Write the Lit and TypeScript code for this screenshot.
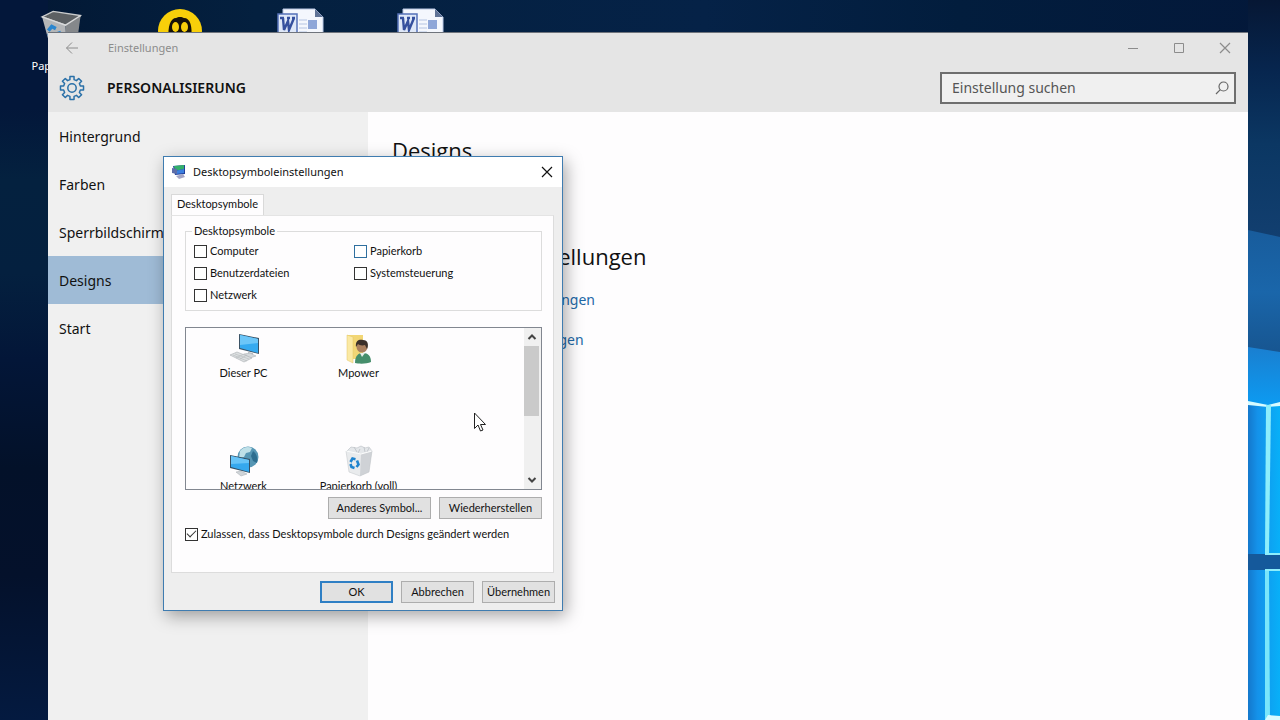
import { LitElement, html, css, svg, nothing } from "lit";
import { customElement, state } from "lit/decorators.js";

const binIcon = (full: boolean) => html`<svg viewBox="0 0 32 32" aria-hidden="true">
  ${full
    ? svg`<path d="M4 6l4-4 6 1 4-2 4 2 4-1 3 4-2 3H7z" fill="#e4e7ea" stroke="#b9bec3" stroke-width=".6"/>
          <path d="M11 2l3 5M17 4l-2 4M21 2l1 5M26 3l-2 4" stroke="#bfc4c9" stroke-width=".9" fill="none"/>
          <path d="M3 6l15 3 11-3-3 21-9 4-11-4z" fill="#e9ebed"/>
          <path d="M18 9l11-3-3 21-9 4z" fill="#cfd2d6"/>
          <path d="M3 6l15 3 11-3" fill="none" stroke="#fbfcfc" stroke-width="1.2"/>
          <path d="M3 6l3 21 11 4 9-4 3-21" fill="none" stroke="#bfc3c7" stroke-width=".5"/>
          <g fill="none" stroke="#1f84cf" stroke-width="2.6">
            <path d="M7.500 17l2-3.500 3 .7"/><path d="M14 15.500l1.500 4-2 2.500"/><path d="M11.500 23l-3-1-1-3"/>
          </g>`
    : svg`<path d="M3 5l8-4 20 3-5 6-6 1z" fill="#5c6063" stroke="#c9cbcc" stroke-width="1"/>
          <path d="M3 5l17 6 1 20-12-4z" fill="#b4b6b8"/>
          <path d="M20 11L31 4l-3 22-7 5z" fill="#85888b"/>
          <path d="M3 5l17 6 11-7" fill="none" stroke="#d9dadb" stroke-width="1"/>
          <g fill="none" stroke="#2a86cf" stroke-width="2.6">
            <path d="M7.500 15l2.500-3 3 1.500"/><path d="M15 15.500l1.500 4-2 2"/><path d="M12 22l-3-2-1-3"/>
          </g>`}
</svg>`;

const beeIcon = html`<svg viewBox="0 0 48 48" aria-hidden="true">
  <circle cx="24" cy="23" r="22" fill="#f8cf0a"/>
  <path d="M13 32c-2-14 2-22 7-22 2-1.500 6-1.500 8 0 6 0 9 8 7 22z" fill="#15110a"/>
  <ellipse cx="19.500" cy="19" rx="3.500" ry="5" fill="#f8cf0a"/><ellipse cx="28.500" cy="19" rx="3.500" ry="5" fill="#f8cf0a"/>
</svg>`;

const wordIcon = html`<svg viewBox="0 0 48 48" aria-hidden="true">
  <path d="M7 1h32l8 8v38H7z" fill="#f4f7fd" stroke="#b9c7e4" stroke-width="1"/>
  <path d="M39 1v8h8z" fill="#5f7396"/>
  <path d="M23 12h8M23 16h8M23 20h8M23 24h8" stroke="#b5c4e2" stroke-width="1"/>
  <rect x="32" y="12" width="9" height="9" fill="#8ea6d8"/>
  <rect x="2" y="6" width="19" height="20" fill="#dfe8f8" stroke="#5572b8" stroke-width="1.500"/>
  <path d="M4 10h4M7 10l1 12 4-9 1 9 5-12M11 10h3M16 10h3" fill="none" stroke="#35509e" stroke-width="2.400"/>
</svg>`;

const gearPath = (() => {
  const pts: string[] = [];
  for (let i = 0; i < 8; i++) {
    const at = (r: number, d: number) => {
      const a = ((i * 45 + d) * Math.PI) / 180;
      return `${(13 + r * Math.cos(a)).toFixed(2)} ${(13 + r * Math.sin(a)).toFixed(2)}`;
    };
    pts.push(at(8.6, -14), at(11.7, -10), at(11.7, 10), at(8.6, 14));
  }
  return "M" + pts.join("L") + "Z";
})();

const pcIcon = html`<svg viewBox="0 0 32 32" aria-hidden="true">
  <path d="M11 2l20 4v16l-20-5z" fill="#3b5366"/>
  <path d="M12 3l18 4v14l-18-5z" fill="#35aaf0"/>
  <path d="M12 3l18 4v4L12 13z" fill="#6cc6f8"/>
  <path d="M20 20l5 1v3l-5-1z" fill="#b9bfc4"/>
  <path d="M16 22l6-1 6 3-6 2z" fill="#d5d9dc" stroke="#a5abb0" stroke-width=".5"/>
  <path d="M2 23l7-3 15 6-8 4z" fill="#dcdfe1" stroke="#a9aeb2" stroke-width=".6"/>
  <path d="M5 23l14 6M7 22l14 5M8 26l8-4M12 27l7-4" stroke="#b3b8bb" stroke-width=".6"/>
</svg>`;

const userFolderIcon = html`<svg viewBox="0 0 32 32" aria-hidden="true">
  <path d="M4 3h16v24H8l-4 1z" fill="#f2d675"/>
  <path d="M4 3l6 2v26l-6-3z" fill="#fbe9a4" stroke="#e3c765" stroke-width=".5"/>
  <circle cx="19" cy="15" r="5.500" fill="#a97f5f"/>
  <path d="M13 15c-1-7 4-8 7-7 5 0 6 5 4 9l-2-4c-3 1-6 0-7-1z" fill="#3a2f2a"/>
  <path d="M12 31c0-7 3-10 8-10s8 3 8 9c-4 2-12 2-16 1z" fill="#468e6c"/>
  <path d="M17 21l2 4 3-4z" fill="#e9efe9"/>
</svg>`;

const networkIcon = html`<svg viewBox="0 0 32 32" aria-hidden="true">
  <circle cx="20" cy="12" r="10.500" fill="#5696b4"/>
  <path d="M12 6c3-4 8-5 12-3l-2 4-4 1-2 4-5 1z" fill="#bfe0e8"/>
  <path d="M25 6c4 3 5 8 4 12l-4-2-2-5z" fill="#2e6e90"/>
  <path d="M2 10l20 4v14L2 23z" fill="#355064"/>
  <path d="M3 11l18 4v12L3 22z" fill="#35a8ee"/>
  <path d="M3 11l18 4v3L3 19z" fill="#68c4f7"/>
  <path d="M8 27l5-1 6 3-6 2z" fill="#cfd4d8" stroke="#a5abb0" stroke-width=".5"/>
</svg>`;

const monitorIcon = html`<svg viewBox="0 0 16 16" aria-hidden="true">
  <path d="M2 2l12-1v9L4 11z" fill="#23409a"/>
  <path d="M3 2l10-1v4L4 7z" fill="#33b06a"/>
  <path d="M4 7l9-2v4l-8 1z" fill="#3b7fe0"/>
  <path d="M1 4l5 1v5L1 9z" fill="#5d6da8"/>
  <path d="M5 12l7-2 2 3-6 2z" fill="#a4a5c4"/>
</svg>`;

const chevron = (up: boolean) => html`<svg viewBox="0 0 10 10" aria-hidden="true">
  <path d=${up ? "M1.500 7L5 3.500 8.500 7" : "M1.500 3L5 6.500 8.500 3"} fill="none" stroke="#444" stroke-width="2"/>
</svg>`;

const closeIcon = html`<svg viewBox="0 0 12 12" aria-hidden="true">
  <path d="M1 1l10 10M11 1L1 11" fill="none" stroke="currentColor" stroke-width="1.200"/>
</svg>`;

@customElement("desktop-wallpaper")
class DesktopWallpaper extends LitElement {
  static styles = css`
    :host { display: block; background: linear-gradient(90deg, #021733 0, #04203f 20%, #052247 55%, #021d3d 75%, #03183a 100%); }
    .scene { display: flex; justify-content: space-between; height: 100%; }
    .shade { width: 48px; background: linear-gradient(180deg, #03173a 0, #03173a 15%, #04213f 25%, #04203f 38%, #031638 50%, #031129 65%, #04112b 80%, #041a40 100%); }
    .light { width: 32px; height: 100%; }
  `;
  render() {
    return html`<div class="scene">
      <div class="shade"></div>
      <svg class="light" viewBox="0 0 32 720" preserveAspectRatio="xMaxYMin slice" aria-hidden="true">
        <defs>
          <linearGradient id="sky" x1="0" y1="0" x2="0" y2="1">
            <stop offset="0" stop-color="#061734"/><stop offset=".3" stop-color="#07264f"/>
            <stop offset=".6" stop-color="#0b3763"/><stop offset="1" stop-color="#123f70"/>
          </linearGradient>
          <linearGradient id="haze" x1="0" y1="0" x2="0" y2="1">
            <stop offset="0" stop-color="#185c9c"/><stop offset=".5" stop-color="#1a66aa"/><stop offset="1" stop-color="#175590"/>
          </linearGradient>
          <linearGradient id="beam" x1="0" y1="0" x2="0" y2="1">
            <stop offset="0" stop-color="#1a7fd0"/><stop offset="1" stop-color="#0c9bf2"/>
          </linearGradient>
          <linearGradient id="pane" x1="0" y1="0" x2="1" y2="0">
            <stop offset="0" stop-color="#1478cc"/><stop offset=".3" stop-color="#1492ea"/><stop offset="1" stop-color="#08b0f8"/>
          </linearGradient>
        </defs>
        <rect width="32" height="240" fill="url(#sky)"/>
        <path d="M0 230l32 7v117H0z" fill="url(#haze)"/>
        <path d="M0 347l32 5v54H0z" fill="url(#beam)"/>
        <rect y="404" width="32" height="316" fill="url(#pane)"/>
        <path d="M0 401l20 4 12-3v4l-12 1-20-2z" fill="#d8fbff"/>
        <rect y="554" width="32" height="16" fill="#15599b"/>
        <path d="M18 405h5l-2 149h-4z" fill="#8deefc"/><path d="M17 554h15" stroke="#8deefc" stroke-width="2"/>
        <path d="M17 570h4l1 150h-5z" fill="#7ae6fb"/><path d="M17 570h15" stroke="#8deefc" stroke-width="2"/>
        <path d="M17 720l3-5 12 1v4z" fill="#d8fbff"/>
      </svg>
    </div>`;
  }
}

@customElement("settings-window")
class SettingsWindow extends LitElement {
  static styles = css`
    :host { display: flex; flex-direction: column; background: #fefdfe; border-top: 1px solid #6f747c; box-sizing: border-box; font: 14px/20px "Noto Sans", "Open Sans", sans-serif; color: #111; }
    .titlebar { display: flex; align-items: center; height: 30px; background: #e5e5e5; color: #8c8c8c; }
    .titlebar button { border: 0; background: none; padding: 0; color: inherit; width: 46px; height: 30px; display: grid; place-items: center; }
    .titlebar svg { width: 12px; height: 12px; fill: none; stroke: currentColor; }
    .titlebar .back { width: 48px; }
    .titlebar .back svg { width: 14px; height: 14px; }
    .caption { flex: 1; padding-left: 12px; font-size: 11px; }
    .header { display: flex; align-items: center; gap: 22px; height: 49px; padding: 0 12px 0 11px; background: #e5e5e5; }
    .gear { width: 26px; height: 26px; flex: none; }
    h1 { flex: 1; margin: 0; font-size: 14px; font-weight: 600; }
    .search { box-sizing: border-box; display: flex; align-items: center; width: 296px; height: 32px; border: 2px solid #6e6e6e; background: #f0f0f0; }
    .search input { flex: 1; min-width: 0; border: 0; background: none; padding: 0 10px; font: inherit; color: #222; outline: 0; }
    .search input::placeholder { color: #555; opacity: 1; }
    .search button { border: 0; padding: 0; background: none; width: 24px; height: 28px; display: grid; place-items: center; }
    .search svg { width: 14px; height: 14px; }
    .main { display: flex; flex: 1; }
    nav { width: 320px; background: #f0f0f0; }
    nav a { display: flex; align-items: center; box-sizing: border-box; height: 48px; padding: 2px 0 0 11px; color: inherit; text-decoration: none; }
    nav a.active { background: #9fbbd6; }
    .content { flex: 1; padding: 22px 24px; }
    h2 { margin: 0 0 74px; font: 400 22px/32px "Open Sans", sans-serif; }
    h2.related { margin-bottom: 18px; }
    .link { display: block; width: max-content; margin-bottom: 20px; color: #2268a6; text-decoration: none; }
  `;
  render() {
    const pages = ["Hintergrund", "Farben", "Sperrbildschirm", "Designs", "Start"];
    return html`
      <div class="titlebar">
        <button class="back" aria-label="Zurück"><svg viewBox="0 0 14 14"><path d="M13 7H1.500M7 1.500L1.500 7 7 12.500"/></svg></button>
        <span class="caption">Einstellungen</span>
        <button aria-label="Minimieren"><svg viewBox="0 0 12 12"><path d="M1 6.500h10"/></svg></button>
        <button aria-label="Maximieren"><svg viewBox="0 0 12 12"><path d="M1.500 1.500h9v9h-9z"/></svg></button>
        <button aria-label="Schließen">${closeIcon}</button>
      </div>
      <div class="header">
        <svg class="gear" viewBox="0 0 26 26" fill="none" stroke="#2a70a8" stroke-width="1.500" stroke-linejoin="round" aria-hidden="true"><path d=${gearPath}/><circle cx="13" cy="13" r="4.200"/></svg>
        <h1>PERSONALISIERUNG</h1>
        <div class="search">
          <input type="text" placeholder="Einstellung suchen" aria-label="Einstellung suchen">
          <button aria-label="Suchen"><svg viewBox="0 0 14 14" fill="none" stroke="#666" stroke-width="1.200"><circle cx="8.500" cy="5.500" r="4.500"/><path d="M5.300 8.700L1 13"/></svg></button>
        </div>
      </div>
      <div class="main">
        <nav>${pages.map((p) => html`<a href="#" class=${p === "Designs" ? "active" : nothing}>${p}</a>`)}</nav>
        <div class="content">
          <h2>Designs</h2>
          <h2 class="related">Verwandte Einstellungen</h2>
          <a class="link" href="#">Erweiterte Soundeinstellungen</a>
          <a class="link" href="#">Desktopsymboleinstellungen</a>
        </div>
      </div>`;
  }
}

@customElement("icon-dialog")
class IconDialog extends LitElement {
  static styles = css`
    :host { display: block; box-sizing: border-box; width: 400px; border: 1px solid #3f7cb0; background: #eeeeee; box-shadow: 3px 5px 16px rgba(0, 0, 0, .35); font: 11px/14px Lato, Arial, sans-serif; color: #111; }
    .title { display: flex; align-items: center; gap: 6px; height: 30px; padding-left: 7px; background: #fff; font: 11px/16px "Noto Sans", sans-serif; }
    .title svg { width: 16px; height: 16px; }
    .title h2 { flex: 1; margin: 0; font: inherit; }
    .title button { width: 30px; height: 30px; border: 0; padding: 0; background: none; display: grid; place-items: center; color: #111; }
    .title button svg { width: 12px; height: 12px; }
    .body { padding: 7px; }
    .tab { display: block; box-sizing: border-box; width: 93px; height: 21px; border: 1px solid #d9d9d9; border-bottom: 0; background: #fefdfe; font: inherit; color: inherit; padding: 0 0 2px; }
    .panel { box-sizing: border-box; margin-right: 1px; border: 1px solid #dcdcdc; border-top-color: #e4e4e4; background: #fefdfe; padding: 8px 11px 31px 13px; }
    fieldset { margin: 0; border: 1px solid #dcdcdc; padding: 2px 8px 4px 6px; min-width: 0; }
    legend { padding: 0 2px; }
    .checks { display: grid; grid-template-columns: 160px 1fr; grid-auto-rows: 22px; padding-left: 2px; }
    label { display: flex; align-items: center; gap: 3px; }
    input { appearance: none; box-sizing: border-box; width: 13px; height: 13px; margin: 0; border: 1px solid #333; background: #fff; display: grid; place-items: center; }
    input.hot { border-color: #2f6f9f; }
    input:checked::before { content: ""; width: 9px; height: 5px; margin-bottom: 3px; border: solid #333; border-width: 0 0 1px 1px; box-sizing: border-box; transform: rotate(-45deg); }
    .list { display: flex; box-sizing: border-box; height: 163px; margin-top: 16px; border: 1px solid #828790; background: #fefdfe; }
    .items { flex: 1; display: grid; grid-template-columns: 115px 115px; grid-auto-rows: 113px; overflow: hidden; padding-top: 4px; }
    .item { display: flex; flex-direction: column; align-items: center; gap: 2px; height: 48px; }
    .item svg { width: 32px; height: 32px; flex: none; }
    .scroll { display: flex; flex-direction: column; width: 17px; background: #f0f0f0; }
    .scroll button { width: 15px; height: 18px; border: 0; padding: 0; background: none; display: grid; place-items: center; }
    .scroll svg { width: 10px; height: 10px; }
    .track { flex: 1; }
    .thumb { width: 15px; height: 70px; background: #cacaca; }
    .row { display: flex; justify-content: flex-end; gap: 8px; margin: 7px 0 8px; }
    .push { box-sizing: border-box; height: 22px; width: 103px; border: 1px solid #adadad; background: #e1e1e1; padding: 0; font: inherit; color: inherit; }
    .footer { margin: 8px 0 0; }
    .footer .push { width: 73px; }
    .push.default { border: 2px solid #2f7fc4; }
  `;
  @state() private allow = true;
  render() {
    const checks = ["Computer", "Papierkorb", "Benutzerdateien", "Systemsteuerung", "Netzwerk"];
    const items = [
      { name: "Dieser PC", icon: pcIcon },
      { name: "Mpower", icon: userFolderIcon },
      { name: "Netzwerk", icon: networkIcon },
      { name: "Papierkorb (voll)", icon: binIcon(true) },
    ];
    return html`
      <div class="title">${monitorIcon}<h2>Desktopsymboleinstellungen</h2><button aria-label="Schließen">${closeIcon}</button></div>
      <div class="body">
        <button class="tab">Desktopsymbole</button>
        <div class="panel">
          <fieldset>
            <legend>Desktopsymbole</legend>
            <div class="checks">${checks.map((c) => html`<label><input type="checkbox" class=${c === "Papierkorb" ? "hot" : nothing}>${c}</label>`)}</div>
          </fieldset>
          <div class="list">
            <div class="items">${items.map((i) => html`<div class="item">${i.icon}<span>${i.name}</span></div>`)}</div>
            <div class="scroll">
              <button aria-label="Nach oben">${chevron(true)}</button>
              <div class="track"><div class="thumb"></div></div>
              <button aria-label="Nach unten">${chevron(false)}</button>
            </div>
          </div>
          <div class="row"><button class="push">Anderes Symbol...</button><button class="push">Wiederherstellen</button></div>
          <label><input type="checkbox" .checked=${this.allow} @change=${(e: Event) => (this.allow = (e.target as HTMLInputElement).checked)}>Zulassen, dass Desktopsymbole durch Designs geändert werden</label>
        </div>
        <div class="row footer"><button class="push default">OK</button><button class="push">Abbrechen</button><button class="push">Übernehmen</button></div>
      </div>`;
  }
}

@customElement("app-root")
class AppRoot extends LitElement {
  static styles = css`
    :host { display: block; position: relative; height: 100vh; overflow: hidden; font: 11px/16px "Noto Sans", sans-serif; }
    .wall { height: 100%; }
    .shortcuts { position: absolute; top: 8px; left: 0; display: flex; }
    .shortcut { width: 120px; display: flex; flex-direction: column; align-items: center; gap: 2px; color: #fff; }
    .shortcut svg { width: 48px; height: 48px; }
    .shortcut.bin svg { width: 44px; }
    .settings { position: absolute; top: 32px; left: 48px; right: 32px; bottom: 0; }
    .dialog { position: absolute; top: 156px; left: 163px; }
    .cursor { position: absolute; top: 412px; left: 474px; width: 12px; height: 20px; }
  `;
  render() {
    return html`
      <desktop-wallpaper class="wall"></desktop-wallpaper>
      <div class="shortcuts">
        <div class="shortcut bin">${binIcon(false)}<span>Papierkorb</span></div>
        <div class="shortcut">${beeIcon}</div>
        <div class="shortcut">${wordIcon}</div>
        <div class="shortcut">${wordIcon}</div>
      </div>
      <settings-window class="settings"></settings-window>
      <icon-dialog class="dialog"></icon-dialog>
      <svg class="cursor" viewBox="0 0 12 20" aria-hidden="true"><path d="M.500 1v15.500l3.500-3.500 2.500 6 2.500-1-2.500-5.500h5z" fill="#fff" stroke="#222" stroke-width="1"/></svg>`;
  }
}
